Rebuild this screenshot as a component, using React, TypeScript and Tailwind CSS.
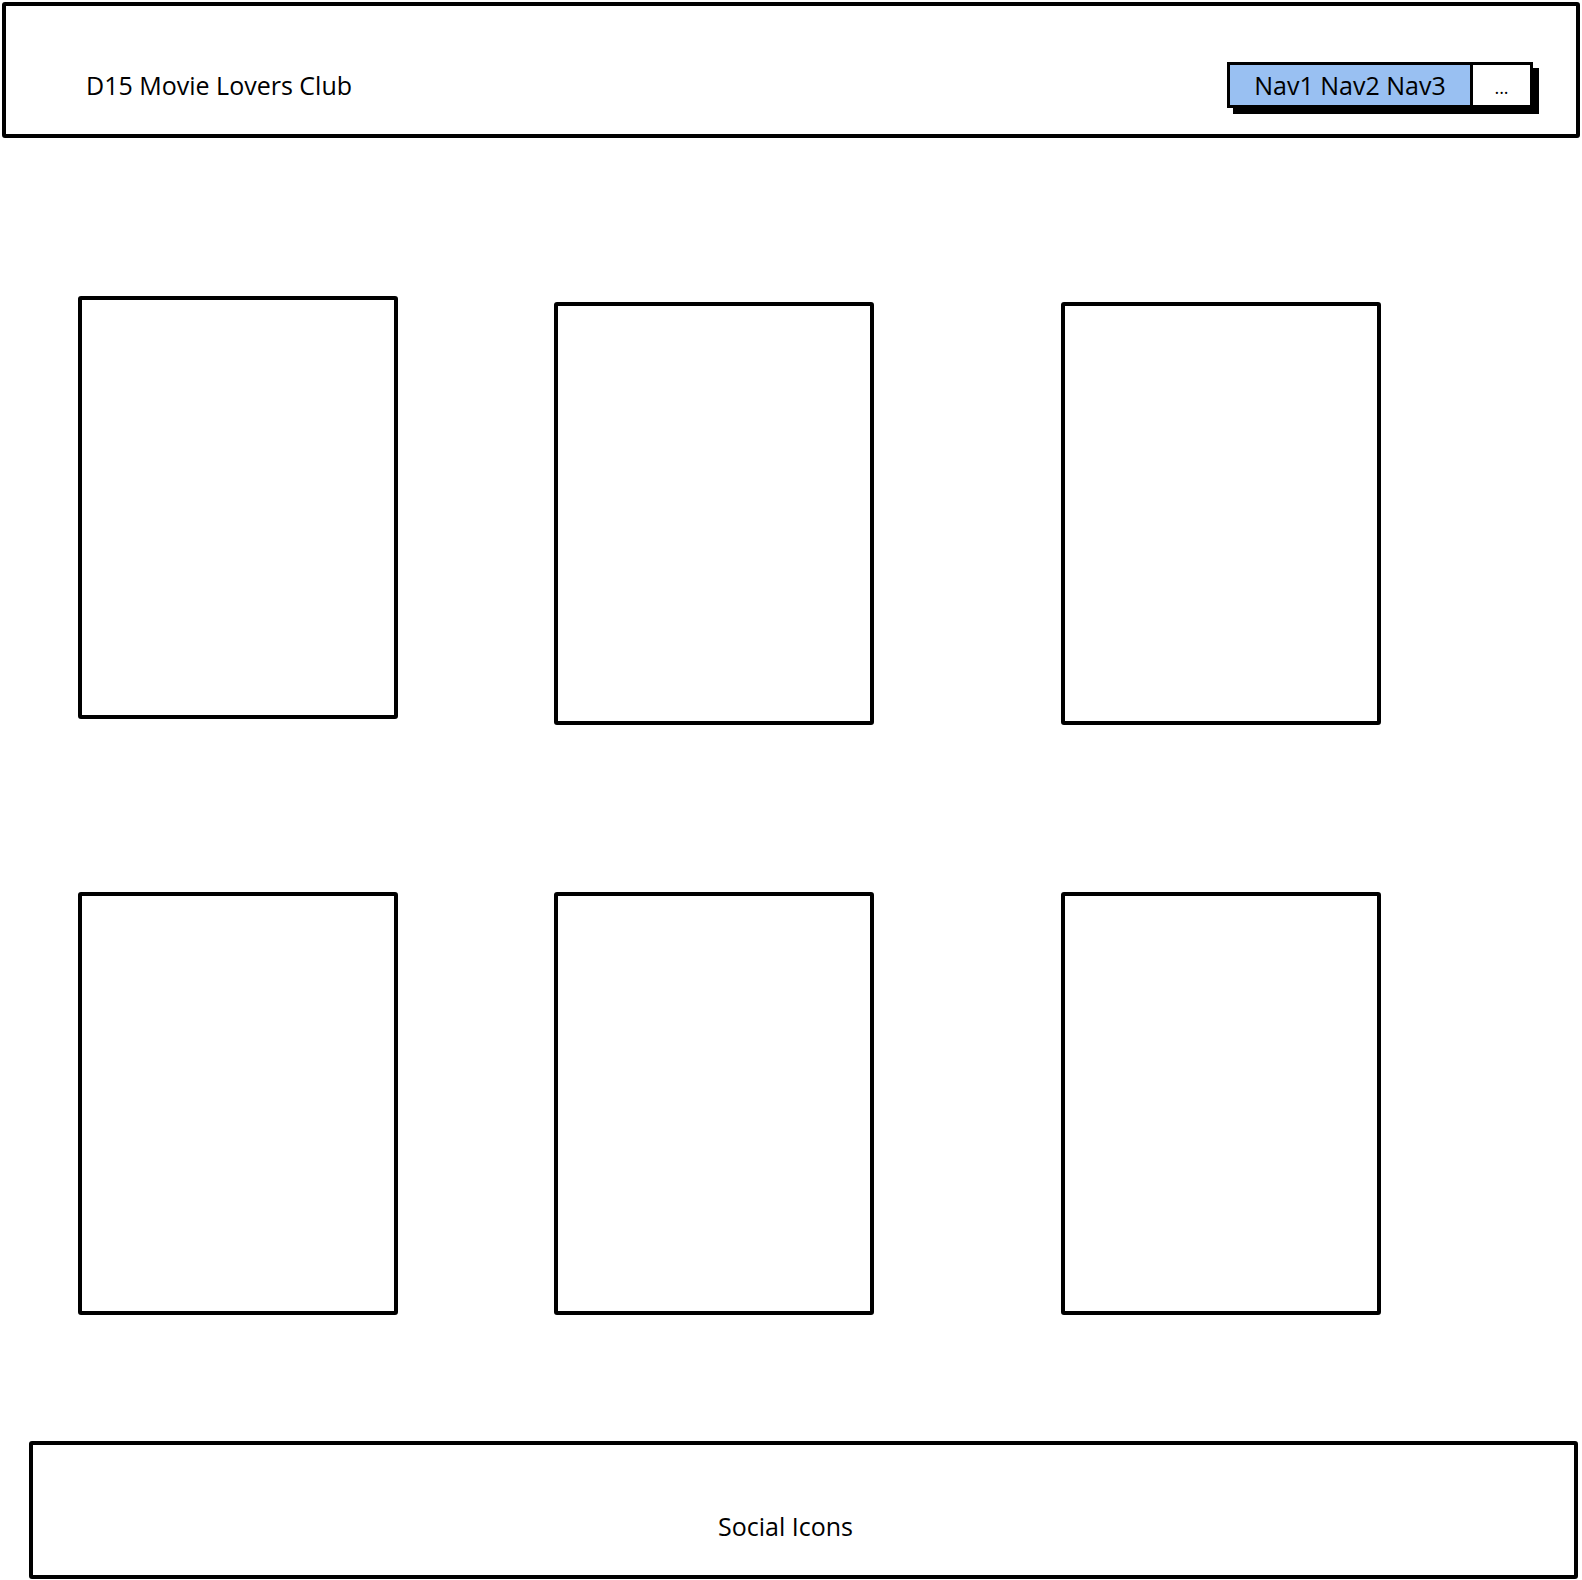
const cards = [0, 1, 2];

function Card({ className }: { className?: string }) {
  return <div className={`h-[423px] w-[320px] rounded-[3px] border-4 border-black bg-white ${className ?? ""}`} />;
}

function CardRow({ first }: { first: boolean }) {
  return (
    <div className="flex items-start pl-[78px]">
      {cards.map((i) => (
        <Card
          key={i}
          className={
            i === 0 ? "" : i === 1 ? `ml-[156px] ${first ? "mt-[6px]" : ""}` : `ml-[187px] ${first ? "mt-[6px]" : ""}`
          }
        />
      ))}
    </div>
  );
}

export default function App() {
  return (
    <div className="flex min-h-[1580px] w-[1582px] flex-col bg-white font-['Open_Sans',sans-serif] text-black">
      <header className="mx-[2px] mt-[2px] flex h-[136px] items-center justify-between rounded-[3px] border-4 border-black pl-[80px] pr-[43px] pt-[30px]">
        <h1 className="text-[25px] leading-none">D15 Movie Lovers Club</h1>
        <nav className="flex h-[46px] items-stretch border-[3px] border-black shadow-[6px_6px_0_#000]">
          <div className="flex w-[240px] items-center justify-center bg-[#99c0f2] text-[25px] leading-none">
            Nav1 Nav2 Nav3
          </div>
          <div className="flex w-[60px] items-end justify-center border-l-[3px] border-black bg-white pb-[9px] text-[18px] leading-none">
            ...
          </div>
        </nav>
      </header>

      <main className="flex flex-col pt-[158px]">
        <CardRow first />
        <div className="h-[167px]" />
        <CardRow first={false} />
      </main>

      <footer className="ml-[29px] mt-[126px] flex h-[138px] w-[1549px] items-center justify-center rounded-[3px] border-4 border-black pr-[36px] pt-[32px]">
        <span className="text-[25px] leading-none">Social Icons</span>
      </footer>
    </div>
  );
}
